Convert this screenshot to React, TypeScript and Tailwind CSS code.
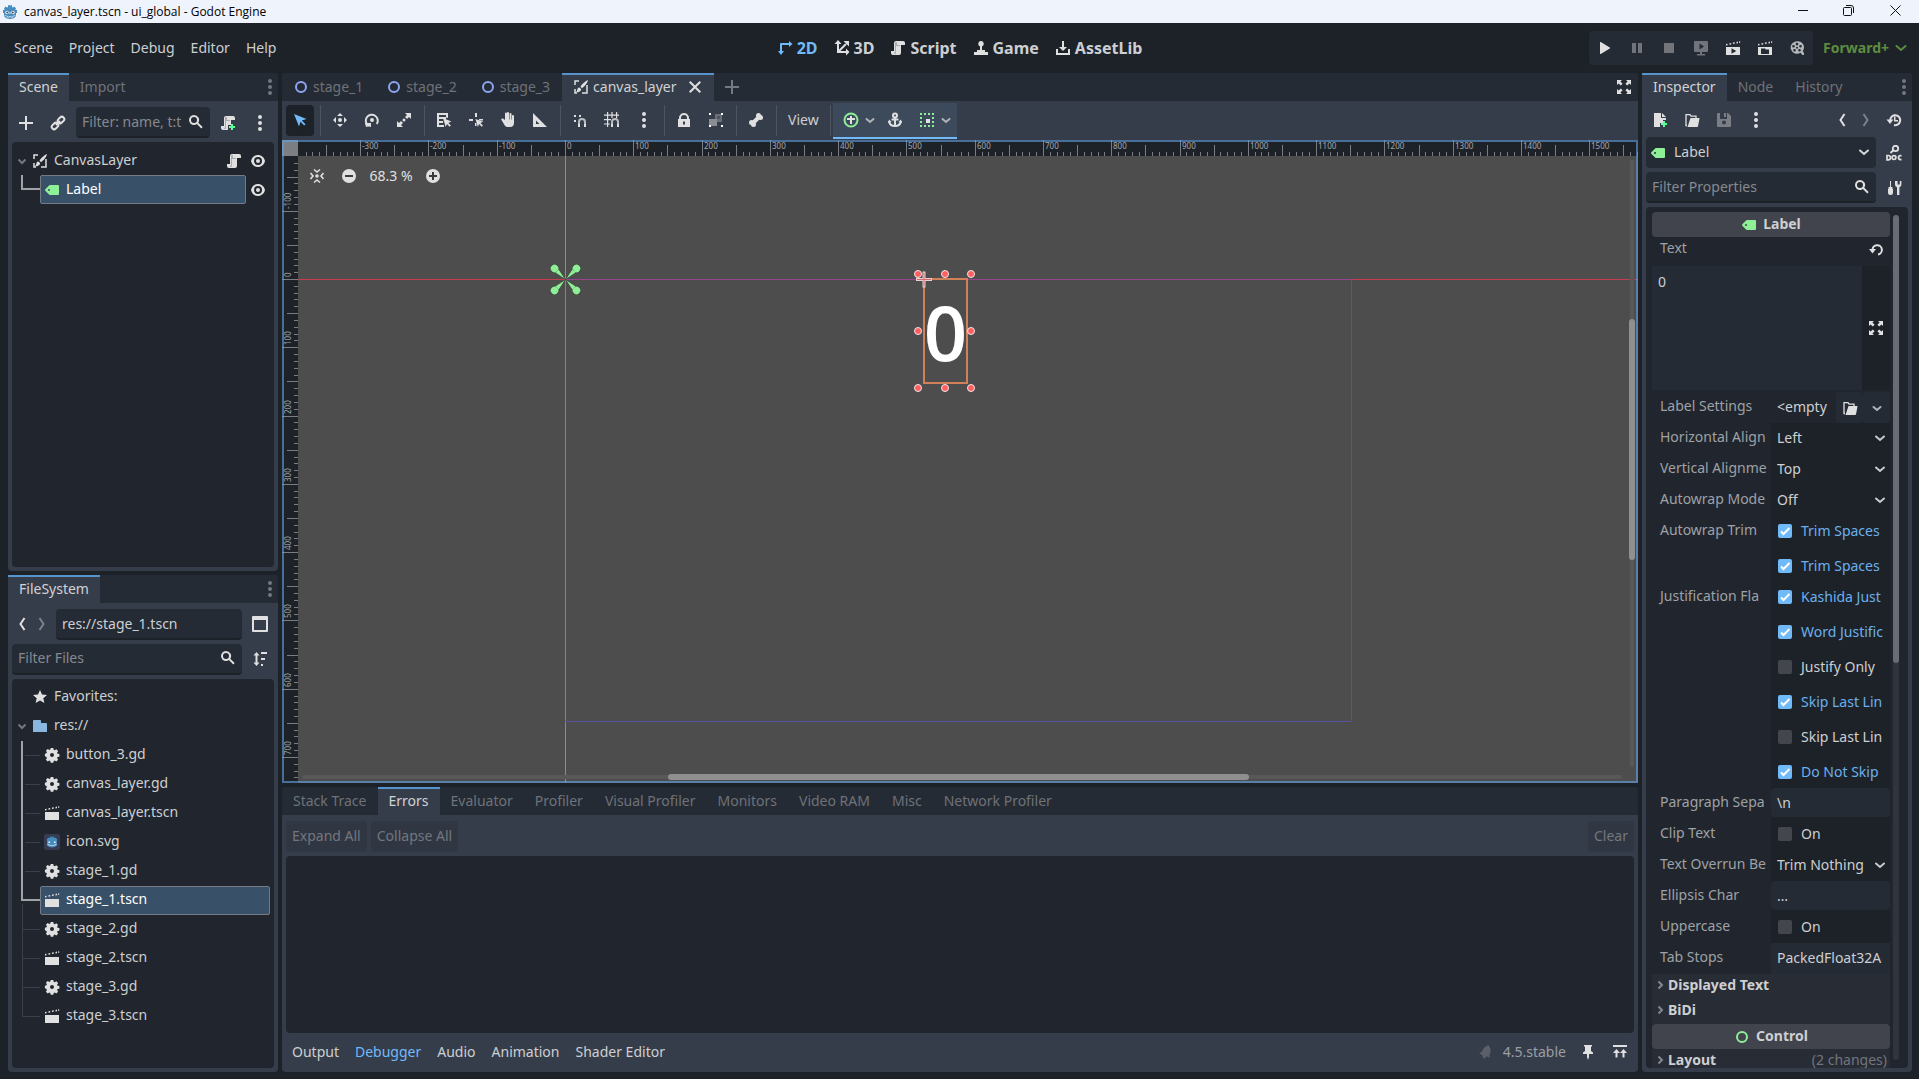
import React from 'react';

interface IconProps {
  children: React.ReactNode;
  color?: string;
  className?: string;
}

const Icon: React.FC<IconProps> = ({ children, color = '#e0e0e0', className = '' }) => (
  <svg viewBox="0 0 16 16" width="16" height="16" fill={color} className={`shrink-0 ${className}`} aria-hidden="true">
    {children}
  </svg>
);

const GREEN = '#8eef97';

const icons = {
  add: <path d="M7 1v6H1v2h6v6h2V9h6V7H9V1z" />,
  link: (
    <g fill="none" stroke="#e0e0e0" strokeWidth="2">
      <rect x="-3.6" y="-2.4" width="7.2" height="4.8" rx="2.4" transform="translate(11 5) rotate(-45)" />
      <rect x="-3.6" y="-2.4" width="7.2" height="4.8" rx="2.4" transform="translate(5 11) rotate(-45)" />
      <path d="M6 10l4-4" />
    </g>
  ),
  search: <path fillRule="evenodd" d="M6 1a5 5 0 1 0 2.9 9.1l4.4 4.4 1.4-1.4-4.4-4.4A5 5 0 0 0 6 1zm0 2a3 3 0 1 1 0 6 3 3 0 0 1 0-6z" />,
  dots: <path d="M8 0a2 2 0 1 0 0 4 2 2 0 0 0 0-4zm0 6a2 2 0 1 0 0 4 2 2 0 0 0 0-4zm0 6a2 2 0 1 0 0 4 2 2 0 0 0 0-4z" />,
  script: (
    <>
      <path d="M6 1a2 2 0 0 0-2 2v8H1v2a2 2 0 0 0 2 2h6a2 2 0 0 0 2-2V5h4V3a2 2 0 0 0-2-2z" />
      <path d="M6 2a1 1 0 0 0-1 1v9a1 1 0 0 1-1 1v1h1a1 1 0 0 0 1-1V6h4V5H7V3a1 1 0 0 0-1-1z" fill="#a9abae" />
    </>
  ),
  scriptAdd: (
    <>
      <path d="M6 1a2 2 0 0 0-2 2v8H1v2a2 2 0 0 0 2 2h5v-5h3V5h4V3a2 2 0 0 0-2-2z" />
      <path d="M6 2a1 1 0 0 0-1 1v9a1 1 0 0 1-1 1v1h1a1 1 0 0 0 1-1V6h4V5H7V3a1 1 0 0 0-1-1z" fill="#a9abae" />
      <path d="M11 9h2v2h2v2h-2v2h-2v-2H9v-2h2z" fill="#5fff97" />
    </>
  ),
  eye: <path fillRule="evenodd" d="M8 2C4.5 2 1.8 4.4 1 8c.8 3.600 3.500 6 7 6s6.200-2.400 7-6c-.8-3.600-3.500-6-7-6zm0 2a4 4 0 1 1 0 8 4 4 0 0 1 0-8zm0 2a2 2 0 1 0 0 4 2 2 0 0 0 0-4z" />,
  label: <path fillRule="evenodd" d="M6 3a1 1 0 0 0-.7.300l-4 4a1 1 0 0 0 0 1.400l4 4A1 1 0 0 0 6 13h8a1 1 0 0 0 1-1V4a1 1 0 0 0-1-1zM5 7a1 1 0 1 1 0 2 1 1 0 0 1 0-2z" />,
  canvasLayer: (
    <>
      <path d="M2 6V2h4M2 10v4h2M9 14h5V6" fill="none" stroke="#e0e0e0" strokeWidth="1.500" />
      <path d="M15 1c-2.500 1-6 4-7.500 6.500L9 9.200C11.500 7.500 14.500 4 15 1zM6.500 8.500c-1.800.2-2 1.300-2.200 2.500-.1.900-.6 1.500-1.300 1.900 2.200.7 5-.2 5.200-2.600z" />
    </>
  ),
  node: <circle cx="8" cy="8" r="5" fill="none" stroke="#8da5f3" strokeWidth="2" />,
  control: <circle cx="8" cy="8" r="5" fill="none" stroke="#8eef97" strokeWidth="2" />,
  close: <path d="M3.400 2L2 3.400 6.600 8 2 12.600 3.400 14 8 9.400l4.600 4.600 1.400-1.400L9.400 8 14 3.400 12.600 2 8 6.600z" />,
  expand: <path d="M1 1h5L4.400 2.600l2.200 2.200-1.800 1.800-2.200-2.200L1 6zM15 1h-5l1.600 1.600-2.200 2.200 1.800 1.800 2.200-2.200L15 6zM1 15h5l-1.600-1.600 2.200-2.200-1.800-1.800-2.200 2.200L1 10zM15 15h-5l1.600-1.600-2.200-2.200 1.800-1.800 2.200 2.200L15 10z" />,
  select: <path d="M2 2l5 12.500 1.500-4.700 3.700 3.700 1.300-1.300-3.700-3.700L14.500 7z" />,
  move: <path d="M8 1L5 4h6zM8 15l3-3H5zM1 8l3 3V5zM15 8l-3-3v6zM8 6a2 2 0 1 0 0 4 2 2 0 0 0 0-4z" />,
  rotate: (
    <>
      <path d="M6.500 13.600H4.300A6 6 0 1 1 12.800 12" fill="none" stroke="#e0e0e0" strokeWidth="2" />
      <path d="M1 11h6v4L5 14l-3 1z" />
      <circle cx="8" cy="8" r="2" />
    </>
  ),
  scale: <path d="M9 1h6v6l-2-2-2 2-2-2 2-2zM1 9l2 2 2-2 2 2-2 2 2 2H1zM8 6.500a1.500 1.500 0 1 0 0 3 1.500 1.500 0 0 0 0-3z" />,
  list: (
    <>
      <path fillRule="evenodd" d="M1 1h11v5l-2-.5V3H3v2h4v2H3v2h4v2H3v2h5v2H1z" />
      <path d="M3 5h7v2H3zM3 9h4v2H3z" />
      <path d="M7 6l2.700 9 1.300-3 2.500 2.800 1.400-1.300-2.600-2.600L15.300 9.500z" />
    </>
  ),
  pivot: (
    <>
      <path d="M7 1h2v4H7zM1 7h4v2H1zM11 7h4v1.500h-4zM7 11h1.500v3H7z" />
      <path d="M7.500 7l2.400 8 1.200-3 2.500 2.800 1.400-1.300-2.600-2.600 2.800-1.200z" />
    </>
  ),
  pan: <path d="M7 1.500a1 1 0 0 0-2 0V8L3 6.600c-1-.6-2.300.6-1.500 1.500L4.500 13c.8 1.400 2 2 3.500 2h2c3 0 4-1.800 4-4V4a1 1 0 0 0-2 0v3.500h-.5V2a1 1 0 0 0-2 0v5.500H9V1a1 1 0 0 0-2 0z" />,
  ruler: <path fillRule="evenodd" d="M1 1v14h14zm3 7.500L7.500 12H4z" />,
  smartSnap: (
    <>
      <path d="M2 3h2v2H2zM7 3h2v2H7zM2 8h2v2H2z" />
      <path d="M7 13.500V10a3 3 0 0 1 6 0v3.500" fill="none" stroke="#b9bbbf" strokeWidth="2" />
      <path d="M6 12h2v3H6zM12 12h2v3h-2z" />
    </>
  ),
  gridSnap: (
    <>
      <path d="M3 0h1.200v15H3zM7.400 0h1.200v6H7.400zM12 0h1.200v6H12zM0 2.500h15v1.200H0zM0 7h7v1.200H0zM0 11.400h6v1.200H0z" />
      <path d="M8 13.500V10a3 3 0 0 1 6 0v3.500" fill="none" stroke="#b9bbbf" strokeWidth="2" />
      <path d="M7 12h2v3H7zM13 12h2v3h-2z" />
    </>
  ),
  lock: <path fillRule="evenodd" d="M8 1a5 5 0 0 0-5 5v1H2v8h12V7h-1V6a5 5 0 0 0-5-5zm0 2a3 3 0 0 1 3 3v1H5V6a3 3 0 0 1 3-3zM7 9.500h2v3H7z" />,
  group: (
    <>
      <path d="M7 2h7v8H9V7H7z" fill="#6b6f77" />
      <path d="M1 7h8v7H1z" fill="#8a8d93" />
      <path d="M9 4h3v3H9z" fill="#4f545e" />
      <path d="M1 1h2v2H1zM13 1h2v2h-2zM1 13h2v2H1zM13 13h2v2h-2z" fill="#ffffff" />
    </>
  ),
  bone: (
    <>
      <path d="M4.500 11.500l7-7" fill="none" stroke="#e0e0e0" strokeWidth="4" />
      <circle cx="10.500" cy="3.500" r="2.500" />
      <circle cx="12.500" cy="5.500" r="2.500" />
      <circle cx="3.500" cy="10.500" r="2.500" />
      <circle cx="5.500" cy="12.500" r="2.500" />
    </>
  ),
  controlAdd: (
    <>
      <circle cx="8" cy="8" r="6.500" fill="none" stroke="#8eef97" strokeWidth="2" />
      <path d="M7 4h2v2h3v2H9v4H7V8H4V6h3z" />
    </>
  ),
  anchor: (
    <>
      <circle cx="8" cy="3.500" r="2" fill="none" stroke="#e0e0e0" strokeWidth="2" />
      <path d="M2 9c.5 3 3 5 6 5s5.500-2 6-5" fill="none" stroke="#e0e0e0" strokeWidth="2" />
      <path d="M7 5h2v9H7zM4.500 6.500h7v2h-7zM1 11l1-3.500L4.600 10zM15 11l-1-3.500L11.400 10z" />
    </>
  ),
  container: (
    <>
      <path d="M1 1h2v2H1zM5 1h2v2H5zM9 1h2v2H9zM13 1h2v2h-2zM1 5h2v2H1zM1 9h2v2H1zM1 13h2v2H1zM5 13h2v2H5zM9 13h2v2H9zM13 13h2v2h-2zM13 5h2v2h-2zM13 9h2v2h-2z" fill="#8eef97" />
      <path d="M7 7h4v4H7z" />
    </>
  ),
  chevronDown: <path d="M4.500 7L8 10l3.500-3" fill="none" stroke="#b0b2b6" strokeWidth="2" strokeLinecap="round" />,
  backward: <path d="M10.500 2L6.500 8l4 6" fill="none" stroke="#e0e0e0" strokeWidth="2" />,
  forward: <path d="M5.500 2l4 6-4 6" fill="none" stroke="#7d8087" strokeWidth="2" />,
  splitPanel: <path fillRule="evenodd" d="M1 0a1 1 0 0 0-1 1v14a1 1 0 0 0 1 1h14a1 1 0 0 0 1-1V1a1 1 0 0 0-1-1zm1 4h12v10H2z" />,
  sort: <path d="M4.500 1L1.500 4.500h2v7h-2l3 3.500 3-3.500h-2v-7h2zM9 1h6v2H9zM9 7h4v2H9zM9 13h2v2H9z" />,
  star: <path d="M8 1l2 4.500 5 .5-3.700 3.300L12.400 14 8 11.500 3.600 14l1.100-4.700L1 6l5-.5z" />,
  folder: <path d="M2 2a1 1 0 0 0-1 1v11h14V6a1 1 0 0 0-1-1H9V3a1 1 0 0 0-1-1z" />,
  gear: <path fillRule="evenodd" d="M6.700 1h2.600l.4 1.900 1 .4 1.600-1 1.800 1.800-1 1.600.4 1 1.900.4v2.600l-1.900.4-.4 1 1 1.600-1.800 1.800-1.600-1-1 .4-.4 1.900H6.700l-.4-1.900-1-.4-1.600 1-1.800-1.800 1-1.600-.4-1L.9 9.300V6.700l1.600-.4.4-1-1-1.600 1.800-1.800 1.600 1 1-.4zM8 6a2 2 0 1 0 0 4 2 2 0 0 0 0-4z" />,
  scene: (
    <>
      <path d="M1 7h14v8H1z" />
      <path d="M1 5.500l1.500-.3v-1.500L1 4zM4.500 4.800l1.700-.3V2.900l-1.700.3zM8 4.100l1.700-.3V2.200L8 2.500zM11.500 3.500l1.500-.3V1.600l-1.500.3zM14 2.800h1.200V1.200L14 1.400z" />
    </>
  ),
  open: (
    <>
      <path d="M3 13.500H2V2.700h4l1 1.500h5V6" fill="none" stroke="#e0e0e0" strokeWidth="1.300" />
      <path d="M6.500 6H15a.5.500 0 0 1 .5.600L14 14.200a1 1 0 0 1-1 .8H3.500z" />
    </>
  ),
  newFile: (
    <>
      <path d="M2 1v14h6v-4h3V8h3V6H9V1zM10 1v4h4z" />
      <path d="M11 9h2v2h2v2h-2v2h-2v-2H9v-2h2z" fill="#5fff97" />
    </>
  ),
  save: <path fillRule="evenodd" d="M2 1a1 1 0 0 0-1 1v12a1 1 0 0 0 1 1h12a1 1 0 0 0 1-1V4l-3-3h-1v6H4V1zm6 0v4h2V1zm0 7.500a2 2 0 1 1 0 4 2 2 0 0 1 0-4z" />,
  history: (
    <>
      <path d="M4.200 8A5 5 0 1 1 8 13" fill="none" stroke="#e0e0e0" strokeWidth="2" />
      <path d="M.5 7.500h7L4 12zM8 4.500h1.500V8H12v1.500H8z" />
    </>
  ),
  docSearch: (
    <>
      <circle cx="9.500" cy="3.500" r="2.700" fill="none" stroke="#e0e0e0" strokeWidth="1.800" />
      <path d="M7.500 5L4.500 8" fill="none" stroke="#e0e0e0" strokeWidth="1.800" />
      <path d="M1 10.500h1.300a2 2 0 0 1 0 4.300H1z" fill="none" stroke="#e0e0e0" strokeWidth="1.700" />
      <circle cx="8" cy="12.600" r="1.900" fill="none" stroke="#e0e0e0" strokeWidth="1.700" />
      <path d="M15.500 10.600h-1a2 2 0 0 0 0 4h1" fill="none" stroke="#e0e0e0" strokeWidth="1.700" />
    </>
  ),
  tools: <path d="M4 1h1v6h1.500v2H7v3.500a2.500 2.500 0 0 1-5 0V9h.5V7H4zM9 1v3.500a3 3 0 0 0 2 2.800V15h2.400V7.300a3 3 0 0 0 2-2.800V1h-1.600v3.500h-2.200V1z" />,
  undo: (
    <>
      <path d="M3.500 9a4.700 4.700 0 1 1 5.500 4.500" fill="none" stroke="#e0e0e0" strokeWidth="2" />
      <path d="M0 8h7l-3.500 4.500z" />
    </>
  ),
  play: <path d="M3 2.500v11a.5.500 0 0 0 .8.400l9-5.500a.5.500 0 0 0 0-.8l-9-5.500a.5.500 0 0 0-.8.400z" />,
  pause: <path d="M3 3h4v10H3zM9 3h4v10H9z" />,
  stop: <path d="M3 3h10v10H3z" />,
  remote: <path fillRule="evenodd" d="M2 1a1 1 0 0 0-1 1v9a1 1 0 0 0 1 1h5v2H4v1.500h8V14H9v-2h5a1 1 0 0 0 1-1V2a1 1 0 0 0-1-1zm4.500 2.500L11 6.500 6.500 9.500z" />,
  playScene: (
    <>
      <path fillRule="evenodd" d="M1 7h14v8H1zm5.500 1.200v5.600L11.300 11z" />
      <path d="M1 5.500l1.500-.3v-1.500L1 4zM4.500 4.800l1.700-.3V2.900l-1.700.3zM8 4.100l1.700-.3V2.200L8 2.500zM11.500 3.500l1.500-.3V1.600l-1.500.3zM14 2.800h1.200V1.200L14 1.400z" />
    </>
  ),
  playCustom: (
    <>
      <path fillRule="evenodd" d="M1 7h14v8H1zm3 1.500V14h8V9.500H8.500v-1z" />
      <path d="M1 5.500l1.500-.3v-1.500L1 4zM4.500 4.800l1.700-.3V2.900l-1.700.3zM8 4.100l1.700-.3V2.200L8 2.500zM11.500 3.500l1.500-.3V1.600l-1.500.3zM14 2.800h1.200V1.200L14 1.400z" />
    </>
  ),
  movie: <path fillRule="evenodd" d="M8 1.200a6.300 6.300 0 1 0 3.500 11.500l2 2.300H15v-2l-1.300-1.800A6.300 6.300 0 0 0 8 1.200zm0 1.600a1.300 1.300 0 1 1 0 2.600 1.300 1.300 0 0 1 0-2.600zM4.500 5a1.300 1.300 0 1 1 0 2.600 1.300 1.300 0 0 1 0-2.600zm7 0a1.300 1.300 0 1 1 0 2.600 1.300 1.300 0 0 1 0-2.600zM8 6.800a1 1 0 1 1 0 2 1 1 0 0 1 0-2zM5.500 9a1.300 1.300 0 1 1 0 2.600 1.300 1.300 0 0 1 0-2.600zm5 0a1.300 1.300 0 1 1 0 2.600 1.300 1.300 0 0 1 0-2.600z" />,
  mode2D: (
    <path d="M12 1l3.500 3L12 7V5H5v6h2l-3 4-3-4h2V4a1 1 0 0 1 1-1h8z" />
  ),
  mode3D: (
    <>
      <path d="M4 3v9h8" fill="none" stroke="#e0e0e0" strokeWidth="2" />
      <path d="M4 12l8-8" fill="none" stroke="#e0e0e0" strokeWidth="2" />
      <path d="M4 0l3.500 4h-7zM15.500 12L12 15.500v-7zM9.500 1H15v5.500z" />
    </>
  ),
  game: <path d="M8 1a2.800 2.800 0 0 0-1 5.400V10H4v2H1v3h14v-3h-3v-2H9V6.400A2.800 2.800 0 0 0 8 1z" />,
  assetLib: <path d="M7 1v6H4l4 4 4-4H9V1zM1 9v6h14V9h-2v4H3V9z" />,
  bell: <path d="M9.500 2.500a1.500 1.500 0 0 1 3 .5c1 1 1.500 3 1 5l-1 3 .5 2.500-4-1.200-.8 2H6l-.3-2.700L2 9l2.500-1L6 5.500C7 3.500 8 2.700 9.500 2.500z" />,
  pin: <path d="M4 1h8v1.500h-1V7l2 1.500V10H9v3l-1 3-1-3v-3H3V8.500L5 7V2.500H4z" />,
  expandBottom: <path d="M1 1h14v2H1zM4.500 5L8 9H5.500v4.500h-2V9H1zM11.500 5L15 9h-2.500v4.500h-2V9H8z" />,
  recenter: (
    <>
      <path d="M5 1.500l3 2.500 3-2.500M5 14.500L8 12l3 2.500M1.500 5L4 8l-2.500 3M14.500 5L12 8l2.500 3" fill="none" stroke="#e0e0e0" strokeWidth="1.600" />
      <circle cx="8" cy="8" r="1.800" />
    </>
  ),
  minus: (
    <>
      <circle cx="8" cy="8" r="7" />
      <path d="M4 7h8v2H4z" fill="#3a3a3a" />
    </>
  ),
  plus: (
    <>
      <circle cx="8" cy="8" r="7" />
      <path d="M7 4h2v3h3v2H9v3H7V9H4V7h3z" fill="#3a3a3a" />
    </>
  ),
  godot: (
    <>
      <path d="M2 4.500l1.500-2 1.500 1 1-.5V1.200L7.600 1 8 2.500 8.400 1l1.600.2V3l1 .5 1.500-1 1.500 2-.8 1.500H15v3h-1v3c-1 2-3.500 3-6 3s-5-1-6-3V9H1V6h1.800z" fill="#478cbf" />
      <circle cx="5" cy="8.500" r="1.700" fill="#fff" />
      <circle cx="11" cy="8.500" r="1.700" fill="#fff" />
      <circle cx="5.200" cy="8.500" r=".9" fill="#414042" />
      <circle cx="10.800" cy="8.500" r=".9" fill="#414042" />
      <path d="M2.500 11.500l3 .8v1h1.500v-.7h2v.7h1.500v-1l3-.8" fill="none" stroke="#fff" strokeWidth=".6" />
      <path d="M7.600 8h.8v2h-.8z" fill="#fff" />
    </>
  ),
  iconSvg: (
    <>
      <rect width="16" height="16" rx="2" fill="#363d52" />
      <path d="M3 5l1.500-1.500L6 4l.5-1.500h1L8 3.500l.5-1h1L10 4l1.500-.5L13 5v6c-1 1.700-3 2.500-5 2.500S4 12.700 3 11z" fill="#478cbf" />
      <path d="M4.500 7.500H6V9H4.500zM10 7.500h1.500V9H10zM3.500 10.500h2v1h5v-1h2v.8h-2v.8h-5v-.8h-2z" fill="#fff" />
    </>
  ),
};

type IconName = keyof typeof icons;

const Glyph: React.FC<{ name: IconName; color?: string; className?: string }> = ({ name, color, className }) => (
  <Icon color={color} className={className}>{icons[name]}</Icon>
);

const IconButton: React.FC<{ name: IconName; label: string; color?: string; className?: string }> = ({
  name,
  label,
  color,
  className = 'w-7',
}) => (
  <button aria-label={label} className={`flex h-[31px] shrink-0 items-center justify-center rounded-sm ${className}`}>
    <Glyph name={name} color={color} />
  </button>
);

const Tab: React.FC<{ title: string; active?: boolean }> = ({ title, active }) => (
  <button
    className={`h-7 shrink-0 border-t-2 px-[11px] pb-0.5 ${
      active ? 'border-[#5694cb] bg-[#363d4a] text-[#d0d2d5]' : 'border-transparent text-[#6e7279]'
    }`}
  >
    {title}
  </button>
);

const TabBar: React.FC<{ children: React.ReactNode; menu?: boolean }> = ({ children, menu }) => (
  <div className="flex h-7 shrink-0 items-center rounded-t-sm bg-[#252b34]">
    {children}
    {menu && (
      <button aria-label="Dock options" className="ml-auto flex w-4 justify-center">
        <Glyph name="dots" color="#75787e" />
      </button>
    )}
  </div>
);

const SearchField: React.FC<{ placeholder: string }> = ({ placeholder }) => (
  <label className="flex h-[31px] min-w-0 flex-1 items-center rounded-sm border-b-2 border-[#1d2229] bg-[#252b34] pr-1.5 pl-1.5">
    <input
      type="text"
      aria-label={placeholder}
      placeholder={placeholder}
      className="min-w-0 flex-1 bg-transparent outline-none placeholder:text-[#858990]"
    />
    <Glyph name="search" />
  </label>
);

/* Scene dock */

const CollapseButton: React.FC = () => (
  <button aria-label="Collapse" className="mr-0.5 ml-0.5 flex w-4">
    <Icon>
      <path d="M4.500 6.500L8 10l3.500-3.500" fill="none" stroke="#75787e" strokeWidth="2" />
    </Icon>
  </button>
);

const SceneDock: React.FC = () => (
  <section className="flex min-h-0 flex-1 flex-col rounded-sm bg-[#363d4a]">
    <TabBar menu>
      <Tab title="Scene" active />
      <Tab title="Import" />
    </TabBar>
    <div className="flex gap-1 px-1 pt-1.5">
      <IconButton name="add" label="Add node" />
      <IconButton name="link" label="Instantiate scene" />
      <SearchField placeholder="Filter: name, t:t" />
      <IconButton name="scriptAdd" label="Attach script" />
      <IconButton name="dots" label="More options" />
    </div>
    <div className="m-1 min-h-0 flex-1 rounded-sm bg-[#21262e] py-1 pr-1">
      <div className="flex h-[29px] items-center">
        <CollapseButton />
        <Glyph name="canvasLayer" className="mr-1.5" />
        <span className="flex-1 pb-0.5">CanvasLayer</span>
        <button aria-label="Open script" className="flex w-6 justify-center"><Glyph name="script" /></button>
        <button aria-label="Toggle visibility" className="flex w-6 justify-center"><Glyph name="eye" /></button>
      </div>
      <div className="flex h-[29px] items-center">
        <svg width="28" height="29" className="shrink-0" aria-hidden="true">
          <path d="M10 0v14h18" fill="none" stroke="#a0a2a6" strokeWidth="2" />
        </svg>
        <div className="flex h-full flex-1 items-center gap-1.5 rounded-xs border border-[#757a84] bg-[#385068] pl-[3px] text-white">
          <Glyph name="label" color={GREEN} />
          <span className="pb-0.5">Label</span>
        </div>
        <button aria-label="Toggle visibility" className="flex w-6 justify-center"><Glyph name="eye" /></button>
      </div>
    </div>
  </section>
);

/* FileSystem dock */

const files: { name: string; icon: IconName }[] = [
  { name: 'button_3.gd', icon: 'gear' },
  { name: 'canvas_layer.gd', icon: 'gear' },
  { name: 'canvas_layer.tscn', icon: 'scene' },
  { name: 'icon.svg', icon: 'iconSvg' },
  { name: 'stage_1.gd', icon: 'gear' },
  { name: 'stage_1.tscn', icon: 'scene' },
  { name: 'stage_2.gd', icon: 'gear' },
  { name: 'stage_2.tscn', icon: 'scene' },
  { name: 'stage_3.gd', icon: 'gear' },
  { name: 'stage_3.tscn', icon: 'scene' },
];
const selectedFile = 5;

const Branch: React.FC<{ index: number }> = ({ index }) => (
  <svg width="28" height="29" className="shrink-0" fill="none" aria-hidden="true">
    {index < selectedFile && (
      <>
        <path d="M10 0v29" stroke="#a0a2a6" strokeWidth="2" />
        <path d="M13 14.500h15" stroke="#3c4149" />
      </>
    )}
    {index === selectedFile && (
      <>
        <path d="M10 0v14h18" stroke="#a0a2a6" strokeWidth="2" />
        <path d="M10.500 18v11" stroke="#3c4149" />
      </>
    )}
    {index > selectedFile && (
      <path d={index === files.length - 1 ? 'M10.500 0v14.500H28' : 'M10.500 0v29M10.500 14.500H28'} stroke="#3c4149" />
    )}
  </svg>
);

const FileSystemDock: React.FC = () => (
  <section className="flex min-h-0 flex-1 flex-col rounded-sm bg-[#363d4a]">
    <TabBar menu>
      <Tab title="FileSystem" active />
    </TabBar>
    <div className="flex gap-1 px-1 pt-1.5">
      <div className="flex">
        <IconButton name="backward" label="Previous folder" className="w-5" />
        <IconButton name="forward" label="Next folder" className="w-5" />
      </div>
      <input
        type="text"
        aria-label="Path"
        defaultValue="res://stage_1.tscn"
        className="h-[31px] min-w-0 flex-1 rounded-sm border-b-2 border-[#1d2229] bg-[#252b34] px-1.5 outline-none"
      />
      <IconButton name="splitPanel" label="Split mode" />
    </div>
    <div className="flex gap-1 px-1 pt-1">
      <SearchField placeholder="Filter Files" />
      <IconButton name="sort" label="Sort files" />
    </div>
    <div className="m-1 min-h-0 flex-1 overflow-hidden rounded-sm bg-[#21262e] py-1 pr-1">
      <div className="flex h-[29px] items-center gap-1.5 pl-5">
        <Glyph name="star" />
        <span className="pb-0.5">Favorites:</span>
      </div>
      <div className="flex h-[29px] items-center">
        <CollapseButton />
        <Glyph name="folder" color="#8ab7e0" className="mr-1.5" />
        <span className="pb-0.5">res://</span>
      </div>
      {files.map((file, index) => (
        <div key={file.name} className="flex h-[29px] items-center">
          <Branch index={index} />
          <div
            className={`flex h-full flex-1 items-center gap-1.5 rounded-xs border pl-[3px] ${
              index === selectedFile ? 'border-[#757a84] bg-[#385068] text-white' : 'border-transparent'
            }`}
          >
            <Glyph name={file.icon} />
            <span className="pb-0.5">{file.name}</span>
          </div>
        </div>
      ))}
    </div>
  </section>
);

/* 2D viewport */

const ZOOM = 0.6828;
const ORIGIN_X = 283;
const ORIGIN_Y = 139;
const RULER = 16;

const range = (from: number, to: number) => Array.from({ length: to - from + 1 }, (_, i) => from + i);

const tickLength = (step: number) => (step % 10 === 0 ? 16 : step % 5 === 0 ? 11 : 4);

const Viewport: React.FC = () => {
  const right = ORIGIN_X + Math.round(1152 * ZOOM);
  const bottom = ORIGIN_Y + Math.round(648 * ZOOM);
  const handles = [
    [636, 134], [663, 134], [689, 134],
    [636, 191], [689, 191],
    [636, 248], [663, 248], [689, 248],
  ];

  return (
    <div className="relative min-h-0 flex-1 overflow-hidden bg-[#4d4d4d]">
      <svg className="absolute inset-0 h-full w-full" aria-hidden="true">
        {/* Axes and project bounds */}
        <rect x="0" y={ORIGIN_Y} width="100%" height="1" fill="#c83c52" />
        <rect x={ORIGIN_X} y="0" width="1" height="100%" fill="#7cab22" />
        <path d={`M${right - 0.5} ${ORIGIN_Y}V${bottom + 0.5}H${ORIGIN_X}`} fill="none" stroke="#5553a0" />
        <rect x={ORIGIN_X} y={ORIGIN_Y} width={right - ORIGIN_X} height="1" fill="#97458f" />
        <rect x={ORIGIN_X} y={ORIGIN_Y} width="1" height={bottom - ORIGIN_Y} fill="#71907c" />

        {/* Root cross marker */}
        <g transform={`translate(${ORIGIN_X + 0.5} ${ORIGIN_Y + 0.5})`}>
          {[45, 135, 225, 315].map(angle => (
            <g key={angle} transform={`rotate(${angle})`}>
              <circle cx="15.500" cy="0" r="4.500" fill="#3a3f3a" />
              <path d="M0 0L12 -2.500V2.500Z" fill={GREEN} stroke="#3a3f3a" strokeWidth=".6" />
              <circle cx="15.500" cy="0" r="3.800" fill={GREEN} />
            </g>
          ))}
        </g>

        {/* Selected label */}
        <rect x="642" y="139" width="43" height="104" fill="none" stroke="#d0815a" strokeWidth="2" />
        <text
          x="663.500"
          y="221"
          textAnchor="middle"
          fill="#ffffff"
          className="font-['Open_Sans',sans-serif] text-[76px] font-semibold"
        >
          0
        </text>
        {handles.map(([x, y]) => (
          <circle key={`${x}-${y}`} cx={x} cy={y} r="3.500" fill="#ff5f5f" stroke="#f2e6e6" />
        ))}
        <path d="M634 139.500h16M642 131.500v16" stroke="#e8d0d0" strokeWidth="3" />
        <path d="M635 139.500h14M642 132.500v14" stroke="#d86a6a" strokeWidth="1" />

        {/* Rulers */}
        <rect width="100%" height={RULER} fill="#1d2229" />
        <rect width={RULER} height="100%" fill="#1d2229" />
        <g fill="#797c81">
          {range(-38, 158).map(step => (
            <rect
              key={step}
              x={Math.round(ORIGIN_X + step * 10 * ZOOM)}
              y={RULER - tickLength(step)}
              width="1"
              height={tickLength(step)}
            />
          ))}
          {range(-17, 74).map(step => (
            <rect
              key={step}
              x={RULER - tickLength(step)}
              y={Math.round(ORIGIN_Y + step * 10 * ZOOM)}
              width={tickLength(step)}
              height="1"
            />
          ))}
          <rect width={RULER} height={RULER} fill="#7b7e83" />
        </g>
        <g fill="#a4a7ab" className="text-[8px]">
          {range(-3, 15).map(n => (
            <text key={n} x={Math.round(ORIGIN_X + n * 100 * ZOOM) + 2} y="9">{n * 100}</text>
          ))}
          {range(-1, 7).map(n => (
            <text key={n} transform={`translate(9 ${Math.round(ORIGIN_Y + n * 100 * ZOOM) - 2}) rotate(-90)`}>
              {n * 100}
            </text>
          ))}
        </g>
      </svg>

      {/* Zoom controls */}
      <div className="absolute top-[26px] left-[27px] flex h-5 items-center text-[#e0e0e0] text-shadow-sm">
        <button aria-label="Center view"><Glyph name="recenter" /></button>
        <button aria-label="Zoom out" className="ml-4"><Glyph name="minus" /></button>
        <button className="w-[68px] text-center">68.3 %</button>
        <button aria-label="Zoom in"><Glyph name="plus" /></button>
      </div>

      {/* Scroll bars */}
      <div className="absolute top-5 right-1 bottom-4 w-1 rounded-full bg-[#585858]" />
      <div className="absolute top-[179px] right-[3px] h-[241px] w-1.5 rounded-full bg-[#8f8f8f]" />
      <div className="absolute right-4 bottom-1 left-5 h-1 rounded-full bg-[#585858]" />
      <div className="absolute bottom-[3px] left-[386px] h-1.5 w-[581px] rounded-full bg-[#8f8f8f]" />
      <div className="pointer-events-none absolute inset-0 border-2 border-[#64a4e4]/60" />
    </div>
  );
};

const Separator: React.FC = () => (
  <div className="flex h-[31px] w-1 shrink-0 justify-center">
    <div className="w-px bg-[#4d535f]" />
  </div>
);

const CanvasEditor: React.FC = () => (
  <section className="flex min-h-0 flex-1 flex-col rounded-t-sm bg-[#363d4a]">
    <TabBar>
      {['stage_1', 'stage_2', 'stage_3'].map(name => (
        <button key={name} className="flex h-7 items-center gap-1 pr-3 pl-[11px] text-[#6e7279]">
          <Glyph name="node" />
          <span className="pb-px">{name}</span>
        </button>
      ))}
      <div className="flex h-7 items-center border-t-2 border-[#5694cb] bg-[#363d4a] px-[11px] pb-0.5 text-[#d0d2d5]">
        <button className="flex items-center gap-1">
          <Glyph name="canvasLayer" />
          canvas_layer
        </button>
        <button aria-label="Close tab" className="ml-[11px]"><Glyph name="close" /></button>
      </div>
      <button aria-label="Add new scene" className="ml-2.5"><Glyph name="add" color="#75787e" /></button>
      <button aria-label="Distraction free mode" className="mr-1.5 ml-auto"><Glyph name="expand" /></button>
    </TabBar>
    <div className="flex h-[39px] shrink-0 items-center gap-1 px-1 pb-px">
      <IconButton name="select" label="Select mode" color="#70bafa" className="w-7 bg-[#1d2229]" />
      <Separator />
      <IconButton name="move" label="Move mode" />
      <IconButton name="rotate" label="Rotate mode" />
      <IconButton name="scale" label="Scale mode" />
      <Separator />
      <IconButton name="list" label="List selectable nodes" />
      <IconButton name="pivot" label="Change pivot" />
      <IconButton name="pan" label="Pan mode" />
      <IconButton name="ruler" label="Ruler mode" />
      <Separator />
      <IconButton name="smartSnap" label="Smart snap" />
      <IconButton name="gridSnap" label="Grid snap" />
      <IconButton name="dots" label="Snapping options" />
      <Separator />
      <IconButton name="lock" label="Lock node" />
      <IconButton name="group" label="Group nodes" />
      <Separator />
      <IconButton name="bone" label="Skeleton options" />
      <Separator />
      <button className="px-1.5 pb-px">View</button>
      <div className="flex h-full items-center">
        <Separator />
        <div className="flex h-9 items-center self-end border-b-2 border-[#70bafa] bg-[#3d4a5b] pl-1">
          <button aria-label="Layout mode" className="flex w-11 items-center gap-[3px] pl-1.5">
            <Glyph name="controlAdd" />
            <Glyph name="chevronDown" />
          </button>
          <IconButton name="anchor" label="Anchors" className="mr-1 w-7" />
          <button aria-label="Container sizing" className="flex w-11 items-center gap-[3px] pl-1.5">
            <Glyph name="container" />
            <Glyph name="chevronDown" />
          </button>
        </div>
      </div>
    </div>
    <Viewport />
  </section>
);

/* Bottom panel */

const DebuggerPanel: React.FC = () => (
  <section className="flex h-[285px] shrink-0 flex-col rounded-sm bg-[#363d4a]">
    <TabBar>
      <Tab title="Stack Trace" />
      <Tab title="Errors" active />
      {['Evaluator', 'Profiler', 'Visual Profiler', 'Monitors', 'Video RAM', 'Misc', 'Network Profiler'].map(title => (
        <Tab key={title} title={title} />
      ))}
    </TabBar>
    <div className="flex gap-1 px-1 pt-1.5 text-[#72767f]">
      <button className="h-[31px] rounded-sm bg-[#303642] px-1.5 pb-0.5">Expand All</button>
      <button className="h-[31px] rounded-sm bg-[#303642] px-1.5 pb-0.5">Collapse All</button>
      <button className="ml-auto h-[31px] rounded-sm bg-[#303642] px-1.5 pb-0.5">Clear</button>
    </div>
    <div className="mx-1 mt-1 min-h-0 flex-1 rounded-sm bg-[#21262e]" />
    <div className="flex h-[39px] shrink-0 items-center px-0.5 pb-0.5">
      {['Output', 'Debugger', 'Audio', 'Animation', 'Shader Editor'].map(title => (
        <button key={title} className={`px-2 ${title === 'Debugger' ? 'text-[#70bafa]' : ''}`}>
          {title}
        </button>
      ))}
      <div className="ml-auto flex items-center">
        <Glyph name="bell" color="#5a5f68" className="mr-2.5" />
        <button className="mr-2 text-[#9b9ea5]">4.5.stable</button>
        <IconButton name="pin" label="Pin bottom panel" className="mr-1 w-7" />
        <IconButton name="expandBottom" label="Expand bottom panel" className="mr-0.5 w-7" />
      </div>
    </div>
  </section>
);

/* Inspector */

const Category: React.FC<{ icon: IconName; title: string }> = ({ icon, title }) => (
  <div className="flex h-[25px] shrink-0 items-center justify-center gap-1.5 rounded-sm bg-[#41444c] font-bold">
    <Glyph name={icon} color={GREEN} />
    <h3 className="pb-0.5">{title}</h3>
  </div>
);

const Group: React.FC<{ title: string; note?: string }> = ({ title, note }) => (
  <button className="flex h-[25px] shrink-0 items-start bg-[#282c35] pt-[3px] pr-[3px] leading-4 font-bold">
    <Icon>
      <path d="M6.500 4.500L10 8l-3.500 3.500" fill="none" stroke="#84878d" strokeWidth="2" />
    </Icon>
    {title}
    {note && <span className="ml-auto font-normal text-[#72757c]">{note}</span>}
  </button>
);

const Property: React.FC<{ name: string; id?: string; children: React.ReactNode }> = ({ name, id, children }) => (
  <div className="flex shrink-0">
    <label htmlFor={id} className="h-[27px] flex-1 overflow-hidden pl-2 leading-[27px] whitespace-nowrap text-[#9ea1a6]">
      {name}
    </label>
    <div className="w-[119px] shrink-0 bg-[#1d2229]">{children}</div>
  </div>
);

const SelectProperty: React.FC<{ name: string; value: string }> = ({ name, value }) => (
  <Property name={name} id={name}>
    <div className="relative h-[31px]">
      <select id={name} className="h-full w-full appearance-none bg-transparent pb-0.5 pl-1.5 outline-none">
        <option>{value}</option>
      </select>
      <Icon className="pointer-events-none absolute top-[7px] right-0.5">
        <path d="M4 6.500l4 3.500 4-3.500" fill="none" stroke="#c8cacc" strokeWidth="2" strokeLinecap="round" />
      </Icon>
    </div>
  </Property>
);

const TextProperty: React.FC<{ name: string; value: string }> = ({ name, value }) => (
  <Property name={name} id={name}>
    <div className="h-[31px]">
      <input
        id={name}
        type="text"
        defaultValue={value}
        className="h-[29px] w-full rounded-sm bg-[#252b34] px-1.5 outline-none"
      />
    </div>
  </Property>
);

const FlagsProperty: React.FC<{ name: string; flags: [string, boolean][] }> = ({ name, flags }) => (
  <Property name={name}>
    <div className="flex flex-col gap-1">
      {flags.map(([flag, checked], index) => (
        <label
          key={index}
          className={`flex h-[31px] items-center overflow-hidden pb-px pl-[7px] whitespace-nowrap ${checked ? 'text-[#6bb0ed]' : ''}`}
        >
          <span className="relative mr-[9px] flex">
            <input
              type="checkbox"
              defaultChecked={checked}
              className="peer h-3.5 w-3.5 appearance-none rounded-xs bg-[#44464e] checked:bg-[#70bafa]"
            />
            <svg
              viewBox="0 0 14 14"
              className="pointer-events-none absolute inset-0 hidden h-3.5 w-3.5 peer-checked:block"
              aria-hidden="true"
            >
              <path d="M3 7.500l2.500 2.500L11.500 4" fill="none" stroke="#fff" strokeWidth="2" />
            </svg>
          </span>
          <span className="pb-px">{flag}</span>
        </label>
      ))}
    </div>
  </Property>
);

const Inspector: React.FC = () => (
  <section className="flex w-[270px] shrink-0 flex-col rounded-sm bg-[#363d4a]">
    <TabBar menu>
      <Tab title="Inspector" active />
      <Tab title="Node" />
      <Tab title="History" />
    </TabBar>
    <div className="flex h-9 shrink-0 items-center gap-1 px-1 pt-0.5">
      <IconButton name="newFile" label="New resource" />
      <IconButton name="open" label="Load resource" />
      <IconButton name="save" label="Save resource" color="#7b7e85" />
      <IconButton name="dots" label="Resource options" />
      <IconButton name="backward" label="Previous object" className="ml-auto w-5" />
      <IconButton name="forward" label="Next object" className="w-5" />
      <IconButton name="history" label="Object history" />
    </div>
    <div className="flex gap-1 px-1">
      <div className="relative h-[31px] flex-1">
        <select
          aria-label="Edited object"
          className="h-full w-full appearance-none rounded-sm bg-[#252b34] pb-0.5 pl-7 outline-none"
        >
          <option>Label</option>
        </select>
        <Glyph name="label" color={GREEN} className="pointer-events-none absolute top-2 left-1" />
        <Icon className="pointer-events-none absolute top-[7px] right-1">
          <path d="M4 6.500l4 3.500 4-3.500" fill="none" stroke="#d6d8da" strokeWidth="2" strokeLinecap="round" />
        </Icon>
      </div>
      <IconButton name="docSearch" label="Open documentation" />
    </div>
    <div className="flex gap-1 px-1 pt-1">
      <SearchField placeholder="Filter Properties" />
      <IconButton name="tools" label="Manage properties" />
    </div>
    <div className="m-1 flex min-h-0 flex-1 overflow-hidden rounded-sm bg-[#21262e] pl-1.5">
      <div className="flex min-w-0 flex-1 flex-col overflow-hidden pt-[5px]">
        <Category icon="label" title="Label" />
        <div className="flex h-[29px] shrink-0 items-start justify-between pr-[5px] pl-2 text-[#9ea1a6]">
          <label htmlFor="label-text" className="leading-[21px]">Text</label>
          <button aria-label="Revert value" className="mt-1"><Glyph name="undo" /></button>
        </div>
        <div className="mb-0.5 flex h-[124px] shrink-0 bg-[#1d2229]">
          <textarea
            id="label-text"
            defaultValue="0"
            className="min-w-0 flex-1 resize-none bg-[#252b34] px-1.5 pt-1.5 outline-none"
          />
          <IconButton name="expand" label="Expand text editor" className="w-7 self-center" />
        </div>
        <Property name="Label Settings">
          <div className="flex h-[31px] items-center bg-[#21262e]">
            <button className="h-full w-[65px] overflow-hidden pb-0.5 pl-1.5 text-left">&lt;empty</button>
            <IconButton name="open" label="Load settings" className="w-[27px] bg-[#252b34]" />
            <IconButton name="chevronDown" label="Settings menu" className="w-[27px] bg-[#252b34]" />
          </div>
        </Property>
        <SelectProperty name="Horizontal Align" value="Left" />
        <SelectProperty name="Vertical Alignme" value="Top" />
        <SelectProperty name="Autowrap Mode" value="Off" />
        <FlagsProperty name="Autowrap Trim" flags={[['Trim Spaces', true], ['Trim Spaces', true]]} />
        <FlagsProperty
          name="Justification Fla"
          flags={[
            ['Kashida Just', true],
            ['Word Justific', true],
            ['Justify Only', false],
            ['Skip Last Lin', true],
            ['Skip Last Lin', false],
            ['Do Not Skip', true],
          ]}
        />
        <TextProperty name="Paragraph Sepa" value="\n" />
        <FlagsProperty name="Clip Text" flags={[['On', false]]} />
        <SelectProperty name="Text Overrun Be" value="Trim Nothing" />
        <TextProperty name="Ellipsis Char" value="…" />
        <FlagsProperty name="Uppercase" flags={[['On', false]]} />
        <Property name="Tab Stops">
          <button className="h-[31px] w-full overflow-hidden bg-[#252b34] pb-0.5 pl-1.5 text-left whitespace-nowrap">
            PackedFloat32A
          </button>
        </Property>
        <Group title="Displayed Text" />
        <Group title="BiDi" />
        <Category icon="control" title="Control" />
        <Group title="Layout" note="(2 changes)" />
      </div>
      <div className="mt-2 mr-[9px] mb-2 ml-[3px] w-1.5 rounded-full bg-[#31343b]">
        <div className="h-[448px] rounded-full bg-[#696c72]" />
      </div>
    </div>
  </section>
);

/* Window chrome */

const TitleBar: React.FC = () => (
  <header className="flex h-[23px] shrink-0 items-center bg-[#eff3fb] pl-0.5 font-['Open_Sans',sans-serif] text-xs text-black">
    <Glyph name="godot" />
    <h1 className="ml-1.5">canvas_layer.tscn - ui_global - Godot Engine</h1>
    <div className="ml-auto flex h-full pb-0.5">
      <button aria-label="Minimize" className="flex w-[45px] items-center justify-center">
        <svg width="11" height="11" stroke="#111" fill="none"><path d="M0 5.500h10" /></svg>
      </button>
      <button aria-label="Restore" className="flex w-[45px] items-center justify-center">
        <svg width="11" height="11" stroke="#111" fill="none">
          <path d="M1.500 2.500h6a1 1 0 0 1 1 1v6a1 1 0 0 1-1 1h-6a1 1 0 0 1-1-1v-6a1 1 0 0 1 1-1zM3 .5h5a2.500 2.500 0 0 1 2.500 2.500v5" />
        </svg>
      </button>
      <button aria-label="Close" className="flex w-12 items-center justify-center">
        <svg width="11" height="11" stroke="#111" fill="none"><path d="M.5.500l10 10M10.500.500l-10 10" /></svg>
      </button>
    </div>
  </header>
);

const screens: { title: string; icon: IconName }[] = [
  { title: '2D', icon: 'mode2D' },
  { title: '3D', icon: 'mode3D' },
  { title: 'Script', icon: 'script' },
  { title: 'Game', icon: 'game' },
  { title: 'AssetLib', icon: 'assetLib' },
];

const MenuBar: React.FC = () => (
  <div className="grid h-[50px] shrink-0 grid-cols-[1fr_auto_1fr] items-center">
    <nav className="flex pl-1.5">
      {['Scene', 'Project', 'Debug', 'Editor', 'Help'].map(title => (
        <button key={title} className="px-2">{title}</button>
      ))}
    </nav>
    <nav className="flex gap-4 text-base font-bold">
      {screens.map(({ title, icon }) => (
        <button key={title} className={`flex items-center gap-1 ${title === '2D' ? 'text-[#70bafa]' : ''}`}>
          <Glyph name={icon} color={title === '2D' ? '#70bafa' : undefined} />
          {title}
        </button>
      ))}
    </nav>
    <div className="flex items-center justify-end pr-2.5">
      <div className="flex h-[34px] items-center gap-1 rounded-sm bg-[#252b34] px-0.5">
        <IconButton name="play" label="Run project" />
        <IconButton name="pause" label="Pause" color="#71747a" />
        <IconButton name="stop" label="Stop" color="#71747a" />
        <IconButton name="remote" label="Remote deploy" color="#71747a" />
        <IconButton name="playScene" label="Run current scene" />
        <IconButton name="playCustom" label="Run specific scene" />
        <IconButton name="movie" label="Movie maker mode" color="#b4b6b9" />
      </div>
      <button className="ml-2.5 flex items-center gap-1 font-bold text-[#5d8c3f]">
        Forward+
        <Icon>
          <path d="M3.500 6L8 10l4.500-4" fill="none" stroke="#5d8c3f" strokeWidth="2" strokeLinecap="round" />
        </Icon>
      </button>
    </div>
  </div>
);

const App: React.FC = () => (
  <div className="flex h-screen flex-col overflow-hidden bg-[#1d2229] font-['Noto_Sans',sans-serif] text-sm text-[#cdcfd2]">
    <TitleBar />
    <MenuBar />
    <main className="flex min-h-0 flex-1 gap-1 pr-[7px] pb-[7px] pl-2">
      <div className="flex w-[270px] shrink-0 flex-col gap-1">
        <SceneDock />
        <FileSystemDock />
      </div>
      <div className="flex min-w-0 flex-1 flex-col gap-1">
        <CanvasEditor />
        <DebuggerPanel />
      </div>
      <Inspector />
    </main>
  </div>
);

export default App;
